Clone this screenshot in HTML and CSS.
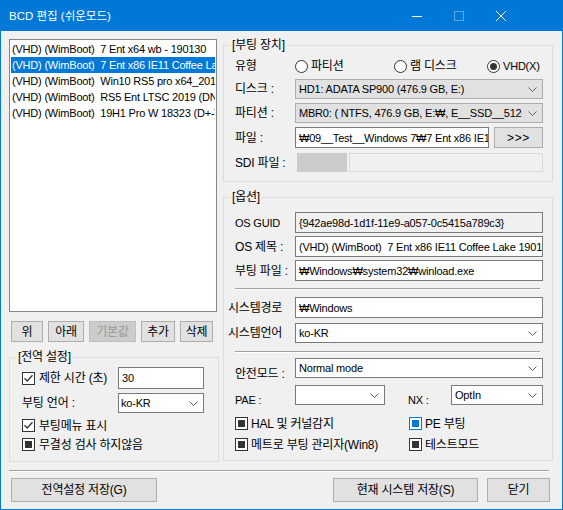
FILE: index.html
```html
<!DOCTYPE html>
<html lang="ko">
<head>
<meta charset="utf-8">
<title>BCD 편집 (쉬운모드)</title>
<link rel="stylesheet" href="styles.css">
</head>
<body>
<div class="window">
  <div class="titlebar">
    <span class="title">BCD 편집 (쉬운모드)</span>
    <div class="caption">
      <span class="cap-btn"><svg width="10" height="10" viewBox="0 0 10 10"><path d="M0 5.5H10" stroke="#fff" stroke-width="1"/></svg></span>
      <span class="cap-btn"><svg width="10" height="10" viewBox="0 0 10 10"><rect x="0.5" y="0.5" width="9" height="9" fill="none" stroke="#ffffff" stroke-opacity="0.35"/></svg></span>
      <span class="cap-btn"><svg width="10" height="10" viewBox="0 0 10 10"><path d="M0 0L10 10M10 0L0 10" stroke="#fff" stroke-width="1"/></svg></span>
    </div>
  </div>
  <div class="client">
    <div class="main">
      <div class="left">
        <ul class="list lat">
          <li>(VHD) (WimBoot)  7 Ent x64 wb - 190130</li>
          <li class="sel">(VHD) (WimBoot)  7 Ent x86 IE11 Coffee Lake 190130</li>
          <li>(VHD) (WimBoot)  Win10 RS5 pro x64_2019</li>
          <li>(VHD) (WimBoot)  RS5 Ent LTSC 2019 (DNA)</li>
          <li>(VHD) (WimBoot)  19H1 Pro W 18323 (D+-)</li>
        </ul>
        <div class="btn-row">
          <span class="btn b-up">위</span>
          <span class="btn b-down">아래</span>
          <span class="btn b-def disabled">기본값</span>
          <span class="btn b-add">추가</span>
          <span class="btn b-del">삭제</span>
        </div>
        <fieldset class="group global">
          <legend>[전역 설정]</legend>
          <div class="gbody">
            <div class="row r-timeout">
              <span class="lbl-g"><span class="chk"><svg width="11" height="11" viewBox="0 0 11 11"><path d="M1.5 5.2L4.2 8L9.5 2.2" fill="none" stroke="#333" stroke-width="1.3"/></svg></span><span class="ctext">제한 시간 (초)</span></span>
              <span class="box lat g-field">30</span>
            </div>
            <div class="row r-lang">
              <span class="lbl-g">부팅 언어 :</span>
              <span class="combo white g-field"><span class="ctxt lat">ko-KR</span><svg class="chev" width="9" height="5" viewBox="0 0 9 5"><path d="M0.5 0.5L4.5 4.5L8.5 0.5" fill="none" stroke="#606060"/></svg></span>
            </div>
            <div class="row ck-row r-menu">
              <span class="chk"><svg width="11" height="11" viewBox="0 0 11 11"><path d="M1.5 5.2L4.2 8L9.5 2.2" fill="none" stroke="#333" stroke-width="1.3"/></svg></span><span class="ctext">부팅메뉴 표시</span>
            </div>
            <div class="row ck-row r-integ">
              <span class="chk ind"></span><span class="ctext">무결성 검사 하지않음</span>
            </div>
          </div>
        </fieldset>
      </div>
      <div class="right">
        <fieldset class="group device">
          <legend>[부팅 장치]</legend>
          <div class="gbody">
            <div class="row r-type">
              <span class="lbl">유형</span>
              <div class="radios">
                <span class="ropt"><span class="radio"></span><span class="ctext">파티션</span></span>
                <span class="ropt"><span class="radio"></span><span class="ctext">램 디스크</span></span>
                <span class="ropt"><span class="radio on"></span><span class="ctext lat">VHD(X)</span></span>
              </div>
            </div>
            <div class="row r-disk">
              <span class="lbl">디스크 :</span>
              <span class="combo"><span class="ctxt lat">HD1: ADATA SP900 (476.9 GB, E:)</span><svg class="chev" width="9" height="5" viewBox="0 0 9 5"><path d="M0.5 0.5L4.5 4.5L8.5 0.5" fill="none" stroke="#606060"/></svg></span>
            </div>
            <div class="row r-part">
              <span class="lbl">파티션 :</span>
              <span class="combo"><span class="ctxt lat">MBR0: ( NTFS, 476.9 GB, E:₩, E__SSD__512GB )</span><svg class="chev" width="9" height="5" viewBox="0 0 9 5"><path d="M0.5 0.5L4.5 4.5L8.5 0.5" fill="none" stroke="#606060"/></svg></span>
            </div>
            <div class="row r-file">
              <span class="lbl">파일 :</span>
              <span class="box lat file-box">₩09__Test__Windows 7₩7 Ent x86 IE11 Coffee Lake.vhd</span>
              <span class="btn b-browse">&gt;&gt;&gt;</span>
            </div>
            <div class="row r-sdi">
              <span class="lbl">SDI 파일 :</span>
              <span class="sdi-btn"></span>
              <span class="sdi-box"></span>
            </div>
          </div>
        </fieldset>
        <fieldset class="group options">
          <legend>[옵션]</legend>
          <div class="gbody">
            <div class="row r-guid">
              <span class="lbl lat">OS GUID</span>
              <span class="box lat ro">{942ae98d-1d1f-11e9-a057-0c5415a789c3}</span>
            </div>
            <div class="row r-os">
              <span class="lbl">OS 제목 :</span>
              <span class="box lat">(VHD) (WimBoot)  7 Ent x86 IE11 Coffee Lake 190130</span>
            </div>
            <div class="row r-boot">
              <span class="lbl">부팅 파일 :</span>
              <span class="box lat">₩Windows₩system32₩winload.exe</span>
            </div>
            <div class="hsep s1"></div>
            <div class="row r-sysdir wide">
              <span class="lbl">시스템경로</span>
              <span class="box lat">₩Windows</span>
            </div>
            <div class="row r-syslang wide">
              <span class="lbl">시스템언어</span>
              <span class="combo white"><span class="ctxt lat">ko-KR</span><svg class="chev" width="9" height="5" viewBox="0 0 9 5"><path d="M0.5 0.5L4.5 4.5L8.5 0.5" fill="none" stroke="#606060"/></svg></span>
            </div>
            <div class="hsep s2"></div>
            <div class="row r-safe">
              <span class="lbl low2">안전모드 :</span>
              <span class="combo white"><span class="ctxt lat">Normal mode</span><svg class="chev" width="9" height="5" viewBox="0 0 9 5"><path d="M0.5 0.5L4.5 4.5L8.5 0.5" fill="none" stroke="#606060"/></svg></span>
            </div>
            <div class="row r-pae">
              <span class="lbl lat low1">PAE :</span>
              <span class="combo white pae"><span class="ctxt"></span><svg class="chev" width="9" height="5" viewBox="0 0 9 5"><path d="M0.5 0.5L4.5 4.5L8.5 0.5" fill="none" stroke="#606060"/></svg></span>
              <span class="lbl lat nx low1">NX :</span>
              <span class="combo white"><span class="ctxt lat">OptIn</span><svg class="chev" width="9" height="5" viewBox="0 0 9 5"><path d="M0.5 0.5L4.5 4.5L8.5 0.5" fill="none" stroke="#606060"/></svg></span>
            </div>
            <div class="checks">
              <span class="citem"><span class="chk ind"></span><span class="ctext">HAL 및 커널감지</span></span>
              <span class="citem"><span class="chk ind blue"></span><span class="ctext">PE 부팅</span></span>
              <span class="citem"><span class="chk ind"></span><span class="ctext">메트로 부팅 관리자(Win8)</span></span>
              <span class="citem"><span class="chk ind"></span><span class="ctext">테스트모드</span></span>
            </div>
          </div>
        </fieldset>
      </div>
    </div>
    <div class="hsep bottom-sep"></div>
    <div class="footer">
      <span class="btn b-global">전역설정 저장(G)</span>
      <span class="btn b-save">현재 시스템 저장(S)</span>
      <span class="btn b-close">닫기</span>
    </div>
  </div>
</div>
</body>
</html>
```

FILE: styles.css
```css
* { box-sizing: border-box; }
html, body { margin: 0; padding: 0; }
body {
  width: 563px;
  height: 510px;
  overflow: hidden;
  background: #f0f0f0;
  color: #000;
  font-family: "Liberation Sans", "Noto Sans CJK KR", sans-serif;
  font-size: 12px;
  line-height: 14px;
  letter-spacing: -0.2px;
}
.lat { font-size: 11px; }
.window { width: 563px; height: 510px; display: flex; flex-direction: column; }

/* title bar */
.titlebar {
  flex: none;
  height: 31px;
  background: #0078d7;
  color: #fff;
  display: flex;
  align-items: center;
  padding-left: 9px;
}
.title { flex: 1; font-size: 11.5px; letter-spacing: 0; white-space: pre; }
.caption { display: flex; margin-right: 41px; }
.cap-btn { width: 42px; height: 31px; display: flex; align-items: center; justify-content: center; }
.cap-btn svg { display: block; }

/* client area */
.client {
  flex: 1;
  border: 1px solid #0078d7;
  border-top: none;
  padding: 0 9px 0 8px;
  display: flex;
  flex-direction: column;
}
.main { display: flex; gap: 4px; }
.left { width: 210px; flex: none; padding-top: 8px; display: flex; flex-direction: column; }
.right { width: 330px; flex: none; padding-top: 7px; display: flex; flex-direction: column; }

/* list */
.list {
  list-style: none;
  margin: 0;
  padding: 1px;
  width: 208px;
  height: 273px;
  background: #fff;
  border: 1px solid #828790;
  overflow: hidden;
}
.list li { height: 16px; line-height: 16px; padding-left: 1px; white-space: pre; overflow: hidden; }
.list li.sel { background: #0078d7; color: #fff; }

/* buttons */
.btn {
  display: flex;
  align-items: center;
  justify-content: center;
  background: #e1e1e1;
  border: 1px solid #adadad;
  white-space: pre;
  flex: none;
}
.btn.disabled { background: #cccccc; border-color: #bfbfbf; color: #999999; }
.btn-row { display: flex; gap: 5px; margin-top: 9px; padding-left: 2px; height: 21px; }
.b-up { width: 32px; }
.b-down { width: 36px; }
.b-def { width: 47px; }
.b-add { width: 34px; }
.b-del { width: 33px; }

/* group boxes */
.group { margin: 0; padding: 0; border: 1px solid #dcdcdc; min-width: 0; }
.group legend { margin-left: 6px; padding: 0 2px; line-height: 14px; }
.global { margin-top: 8px; }
.global .gbody { padding: 3px 14px 8px 12px; }
.device .gbody { padding: 4px 9px 9px 11px; }
.options { margin-top: 8px; }
.options .gbody { padding: 8px 9px 7px 11px; }

.row { display: flex; align-items: center; }
.lbl { width: 60px; flex: none; white-space: pre; }
.ctext { white-space: pre; }

/* global group */
.lbl-g { width: 96px; flex: none; display: flex; align-items: center; gap: 4px; white-space: pre; }
.g-field { width: 86px; flex: none; }
.r-timeout { height: 22px; }
.r-timeout .box { height: 22px; padding-left: 3px; }
.r-lang { height: 20px; margin-top: 4px; }
.r-lang .combo { height: 20px; padding-left: 2px; }
.ck-row { gap: 4px; height: 17px; }
.r-menu { margin-top: 4px; }
.r-integ { margin-top: 2px; }

/* fields */
.box {
  flex: 1;
  min-width: 0;
  height: 21px;
  border: 1px solid #7a7a7a;
  background: #fff;
  padding: 0 3px;
  display: flex;
  align-items: center;
  white-space: pre;
  overflow: hidden;
}
.box.ro { background: #f0f0f0; }
.combo {
  flex: 1;
  min-width: 0;
  height: 20px;
  border: 1px solid #adadad;
  background: #e1e1e1;
  padding: 0 5px 0 3px;
  display: flex;
  align-items: center;
}
.combo.white { background: #fff; border-color: #7a7a7a; }
.ctxt { flex: 1; min-width: 0; overflow: hidden; white-space: pre; }
.chev { flex: none; display: block; margin-left: 6px; }

/* device group rows */
.r-type { height: 20px; }
.radios { display: grid; grid-template-columns: 99px 93px auto; }
.ropt { display: flex; align-items: center; gap: 3px; }
.radio {
  width: 13px; height: 13px; flex: none;
  border: 1px solid #333; border-radius: 50%;
  background: #fff;
  display: flex; align-items: center; justify-content: center;
}
.radio.on::after { content: ""; width: 7px; height: 7px; border-radius: 50%; background: #333; }
.r-disk { margin-top: 3px; height: 20px; }
.r-part { margin-top: 4px; height: 20px; }
.r-file { margin-top: 4px; height: 21px; }
.file-box { flex: none; width: 194px; }
.b-browse { width: 49px; height: 21px; margin-left: 5px; letter-spacing: 0.6px; }
.r-sdi { margin-top: 5px; height: 19px; }
.sdi-btn { width: 50px; height: 19px; margin-left: 2px; background: #cccccc; border: 1px solid #cccccc; flex: none; }
.sdi-box { flex: 1; height: 19px; margin-left: 2px; background: #f0f0f0; border: 1px solid #d9d9d9; }

/* options group rows */
.r-os, .r-boot { margin-top: 3px; }
.hsep { height: 2px; border-top: 1px solid #a0a0a0; border-bottom: 1px solid #fff; flex: none; }
.s1 { margin: 7px 3px 0 0; }
.wide { margin-left: -7px; }
.wide .lbl { width: 67px; }
.r-sysdir { margin-top: 7px; }
.r-syslang { margin-top: 5px; }
.s2 { margin: 8px 3px 0 0; }
.r-safe { margin-top: 5px; height: 20px; }
.r-pae { margin-top: 7px; height: 20px; }
.low2 { align-self: flex-end; margin-bottom: -3px; }
.low1 { align-self: flex-end; margin-bottom: -2px; }
.pae { flex: none; width: 90px; }
.nx { width: 43px; margin-left: 23px; }
.checks { display: grid; grid-template-columns: 174px 1fr; row-gap: 4px; margin-top: 10px; }
.citem { display: flex; align-items: center; gap: 3px; height: 17px; }

/* checkboxes */
.chk {
  width: 13px; height: 13px; flex: none;
  border: 1px solid #333;
  background: #fff;
  display: flex; align-items: center; justify-content: center;
}
.chk svg { display: block; }
.chk.ind::after { content: ""; width: 7px; height: 7px; background: #333; }
.chk.blue { border-color: #0078d7; }
.chk.blue::after { background: #0078d7; }

/* footer */
.bottom-sep { margin: 8px 4px 0 0; }
.footer { display: flex; margin-top: 6px; padding: 0 3px 0 2px; gap: 9px; }
.footer .btn { height: 24px; }
.b-global { width: 146px; margin-right: auto; }
.b-save { width: 145px; }
.b-close { width: 63px; }
```
